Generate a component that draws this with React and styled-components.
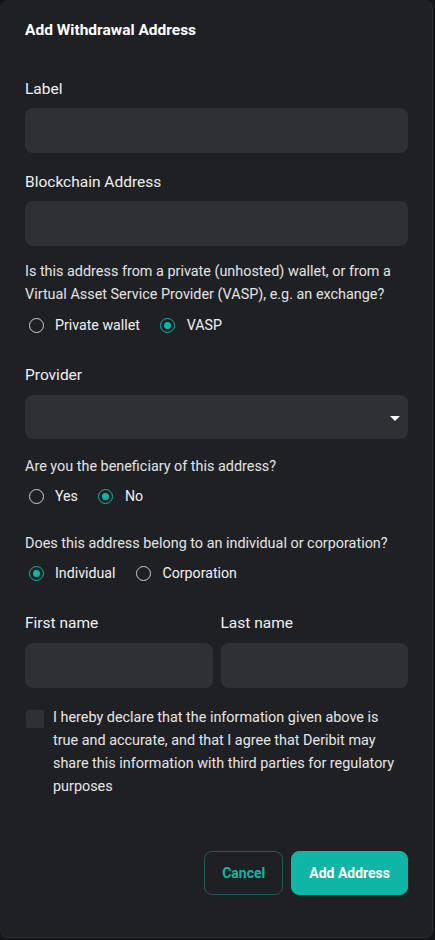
import React, { useState } from 'react';
import styled, { createGlobalStyle } from 'styled-components';

const GlobalStyle = createGlobalStyle`
  html, body {
    margin: 0;
    padding: 0;
    background: #141517;
  }
  body {
    font-family: Roboto, 'Liberation Sans', sans-serif;
    color: #e6e6e6;
  }
`;

const TEAL = '#0fb5a5';

const Panel = styled.div`
  box-sizing: border-box;
  width: 433px;
  height: 938px;
  background: #1f2023;
  border-radius: 8px;
  border-right: 1px solid #2a2b2e;
  border-bottom: 1px solid #2a2b2e;
  padding: 20px 24px 0 25px;
  display: flex;
  flex-direction: column;
`;

const Title = styled.h1`
  margin: 0;
  font-size: 15.5px;
  line-height: 20px;
  font-weight: 700;
  color: #fff;
`;

const Label = styled.div`
  margin-top: ${p => p.$mt || 0}px;
  font-size: 15.5px;
  line-height: 20px;
  font-weight: 400;
  color: #f0f0f0;
`;

const Question = styled.p`
  margin: ${p => p.$mt || 0}px 0 0 0;
  font-size: 14.4px;
  line-height: 23px;
  color: #e3e3e3;
`;

const Input = styled.input`
  box-sizing: border-box;
  display: block;
  width: 100%;
  height: 45px;
  margin-top: ${p => p.$mt || 0}px;
  border: none;
  outline: none;
  border-radius: 8px;
  background: #2f3033;
  color: #fff;
  padding: 0 14px;
  font: inherit;
`;

const SelectBox = styled.div`
  height: 44px;
  margin-top: 10px;
  border-radius: 8px;
  background: #2f3033;
  display: flex;
  align-items: center;
  justify-content: flex-end;
  padding-right: 8px;
`;

const Caret = styled.span`
  width: 0;
  height: 0;
  border-left: 5px solid transparent;
  border-right: 5px solid transparent;
  border-top: 5px solid #fff;
  margin-top: 2px;
`;

const RadioRow = styled.div`
  display: flex;
  align-items: center;
  gap: 17px;
  height: 20px;
  margin-top: ${p => p.$mt || 0}px;
`;

const Option = styled.label`
  display: flex;
  align-items: center;
  gap: 8px;
  font-size: 14.2px;
  font-weight: 400;
  color: #f2f2f2;
  cursor: pointer;
`;

const RadioOuter = styled.span`
  width: 22px;
  height: 22px;
  display: flex;
  align-items: center;
  justify-content: center;
`;

const RadioCircle = styled.span`
  box-sizing: border-box;
  width: 15px;
  height: 15px;
  border-radius: 50%;
  border: 1.6px solid ${p => (p.$on ? TEAL : '#cfcfcf')};
  display: flex;
  align-items: center;
  justify-content: center;
  &::after {
    content: '';
    width: 7px;
    height: 7px;
    border-radius: 50%;
    background: ${p => (p.$on ? TEAL : 'transparent')};
  }
`;

const NameGrid = styled.div`
  display: grid;
  grid-template-columns: 1fr 1fr;
  column-gap: 8px;
  margin-top: 30px;
`;

const Declaration = styled.label`
  display: flex;
  align-items: flex-start;
  gap: 9px;
  margin-top: 18px;
  cursor: pointer;
`;

const Box = styled.span`
  flex: none;
  width: 18px;
  height: 18px;
  margin: 4px 0 0 1px;
  border-radius: 2px;
  background: ${p => (p.$on ? TEAL : '#2f3033')};
`;

const DeclText = styled.span`
  max-width: 348px;
  font-size: 14.4px;
  line-height: 23px;
  color: #e6e6e6;
`;

const Actions = styled.div`
  display: flex;
  justify-content: flex-end;
  gap: 8px;
  margin-top: 53px;
`;

const Button = styled.button`
  box-sizing: border-box;
  height: 44px;
  padding: 0 17px;
  border-radius: 8px;
  border: 1px solid ${p => (p.$primary ? TEAL : '#1f5a55')};
  background: ${p => (p.$primary ? TEAL : 'transparent')};
  color: ${p => (p.$primary ? '#fff' : TEAL)};
  font-family: Roboto, 'Liberation Sans', sans-serif;
  font-size: 14px;
  font-weight: 700;
  cursor: pointer;
`;

const Radio = ({ checked, label, onClick }) => (
  <Option onClick={onClick}>
    <RadioOuter>
      <RadioCircle $on={checked} />
    </RadioOuter>
    {label}
  </Option>
);

const App = () => {
  const [walletType, setWalletType] = useState('vasp');
  const [beneficiary, setBeneficiary] = useState('no');
  const [entity, setEntity] = useState('individual');
  const [agreed, setAgreed] = useState(false);

  return (
    <>
      <GlobalStyle />
      <Panel>
        <Title>Add Withdrawal Address</Title>

        <Label $mt={39}>Label</Label>
        <Input $mt={9} />

        <Label $mt={19}>Blockchain Address</Label>
        <Input $mt={9} />

        <Question $mt={14}>
          Is this address from a private (unhosted) wallet, or from a Virtual Asset Service
          Provider (VASP), e.g. an exchange?
        </Question>
        <RadioRow $mt={9}>
          <Radio label="Private wallet" checked={walletType === 'private'} onClick={() => setWalletType('private')} />
          <Radio label="VASP" checked={walletType === 'vasp'} onClick={() => setWalletType('vasp')} />
        </RadioRow>

        <Label $mt={30}>Provider</Label>
        <SelectBox>
          <Caret />
        </SelectBox>

        <Question $mt={16}>Are you the beneficiary of this address?</Question>
        <RadioRow $mt={8}>
          <Radio label="Yes" checked={beneficiary === 'yes'} onClick={() => setBeneficiary('yes')} />
          <Radio label="No" checked={beneficiary === 'no'} onClick={() => setBeneficiary('no')} />
        </RadioRow>

        <Question $mt={26}>Does this address belong to an individual or corporation?</Question>
        <RadioRow $mt={8}>
          <Radio label="Individual" checked={entity === 'individual'} onClick={() => setEntity('individual')} />
          <Radio label="Corporation" checked={entity === 'corporation'} onClick={() => setEntity('corporation')} />
        </RadioRow>

        <NameGrid>
          <Label>First name</Label>
          <Label>Last name</Label>
          <Input $mt={10} />
          <Input $mt={10} />
        </NameGrid>

        <Declaration onClick={() => setAgreed(!agreed)}>
          <Box $on={agreed} />
          <DeclText>
            I hereby declare that the information given above is true and accurate, and that I
            agree that Deribit may share this information with third parties for regulatory
            purposes
          </DeclText>
        </Declaration>

        <Actions>
          <Button>Cancel</Button>
          <Button $primary>Add Address</Button>
        </Actions>
      </Panel>
    </>
  );
};

export default App;
